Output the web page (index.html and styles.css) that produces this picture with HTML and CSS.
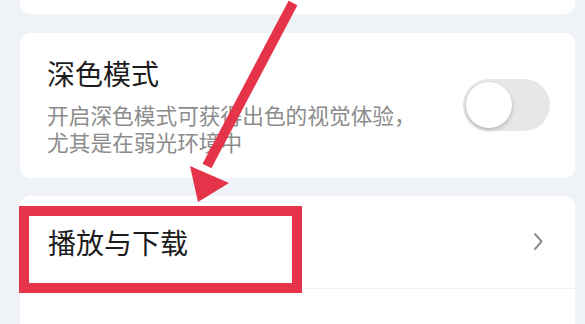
FILE: index.html
```html
<!DOCTYPE html>
<html lang="zh-CN">
<head>
    <meta charset="UTF-8">
    <meta name="viewport" content="width=device-width, initial-scale=1.0">
    <title>设置</title>
    <link rel="stylesheet" href="styles.css">
</head>
<body>
    <div class="page">
        <div class="card card-top"></div>

        <div class="card setting">
            <div class="setting-text">
                <div class="setting-title">深色模式</div>
                <div class="setting-desc">开启深色模式可获得出色的视觉体验，尤其是在弱光环境中</div>
            </div>
            <div class="switch"><span class="knob"></span></div>
        </div>

        <div class="card list">
            <div class="list-row">
                <span class="row-label">播放与下载</span>
                <svg class="chevron" width="10" height="20" viewBox="0 0 10 20">
                    <polyline points="2,2 8.5,9.5 2,17" fill="none" stroke="#8e8e8e" stroke-width="2" stroke-linecap="round" stroke-linejoin="round"/>
                </svg>
            </div>
            <div class="list-row"></div>
        </div>
    </div>

    <!-- annotation drawn over the screenshot -->
    <svg class="annotation" width="585" height="324" viewBox="0 0 585 324">
        <line x1="293" y1="3" x2="207" y2="166" stroke="#e5334a" stroke-width="10"/>
        <polygon points="198,202 190,166 229,183" fill="#e5334a"/>
        <rect x="24" y="211" width="273" height="77" fill="none" stroke="#e5334a" stroke-width="10"/>
    </svg>
</body>
</html>
```

FILE: styles.css
```css
body {
    margin: 0;
    background: #eff2f6;
    font-family: "Noto Sans CJK SC", "Noto Sans", sans-serif;
    color: #1c1c1c;
    overflow: hidden;
}

.page {
    padding: 0 10px 0 20px;
}

.card {
    background: #fff;
    border-radius: 10px;
}

.card-top {
    height: 14px;
    border-radius: 0 0 10px 10px;
    margin-bottom: 19px;
}

.setting {
    display: flex;
    align-items: center;
    justify-content: space-between;
    padding: 22px 25px 23px 27px;
    margin-bottom: 18px;
}

.setting-title {
    font-size: 28px;
    line-height: 36px;
}

.setting-desc {
    width: 380px;
    margin-top: 10px;
    font-size: 21.7px;
    line-height: 27px;
    color: #8c8c8c;
}

.switch {
    display: flex;
    align-items: center;
    width: 87px;
    height: 52px;
    padding: 0 3px;
    box-sizing: border-box;
    border-radius: 26px;
    background: #e7e7e7;
}

.knob {
    width: 46px;
    height: 46px;
    border-radius: 50%;
    background: #fff;
    box-shadow: 0 2px 4px rgba(0, 0, 0, 0.22);
}

.list {
    border-radius: 10px 10px 0 0;
}

.list-row {
    display: flex;
    align-items: center;
    justify-content: space-between;
    height: 92px;
    padding: 0 32px 0 28px;
    border-bottom: 1px solid #f1f1f1;
}

.row-label {
    font-size: 28px;
    line-height: 36px;
}

.chevron {
    display: block;
}

.annotation {
    position: absolute;
    top: 0;
    left: 0;
    pointer-events: none;
}
```
